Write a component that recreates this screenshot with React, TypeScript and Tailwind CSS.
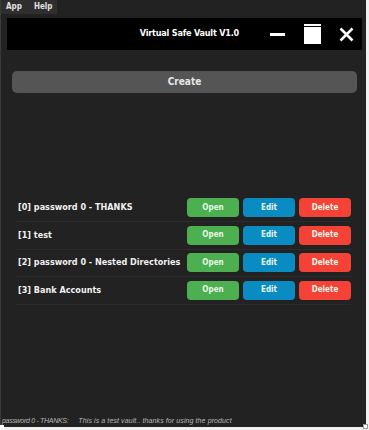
import React from "react";

const vaults = [
  "[0] password 0 - THANKS",
  "[1] test",
  "[2] password 0 - Nested Directories",
  "[3] Bank Accounts",
];

function RowButton({ label, color }: { label: string; color: string }) {
  return (
    <button
      className={`w-[52px] h-[19px] rounded-[4px] text-[8px] font-bold text-[#e8f5e8] ${color}`}
    >
      {label}
    </button>
  );
}

export default function App() {
  return (
    <div
      className="w-[369px] h-[430px] bg-[#f0f0f0] relative overflow-hidden"
      style={{ fontFamily: "'DejaVu Sans Condensed', 'Liberation Sans', sans-serif" }}
    >
      <div className="w-[366px] h-[427px] bg-[#222222] border-l border-[#3a3a3a] flex flex-col">
        {/* menu */}
        <div className="h-[14px] flex">
          <div className="bg-[#2e2e2e] flex items-center gap-[12px] px-[5px] text-[8px] text-[#e0e0e0] font-bold">
            <span>App</span>
            <span>Help</span>
          </div>
        </div>

        {/* title bar */}
        <div className="ml-[6px] mr-[4px] mt-[4px] h-[32px] bg-black flex items-center justify-end pr-[8px]">
          <span className="text-[9px] font-bold text-white tracking-[-0.2px]">Virtual Safe Vault V1.0</span>
          <div className="ml-[31px] w-[15px] h-[3px] bg-white" />
          <div className="ml-[19px] w-[17px] h-[20px] flex flex-col gap-[1px]">
            <div className="h-[2px] bg-white" />
            <div className="flex-1 bg-white" />
          </div>
          <svg className="ml-[18px]" width="15" height="15" viewBox="0 0 15 15">
            <path d="M1.5 1.5 L13.5 13.5 M13.5 1.5 L1.5 13.5" stroke="white" strokeWidth="2.6" />
          </svg>
        </div>

        {/* create */}
        <div className="pl-[11px] pr-[9px] mt-[18px]">
          <button className="w-full h-[22px] rounded-[5px] bg-[#555555] text-[10px] font-bold text-[#e6e6e6]">
            Create
          </button>
        </div>

        {/* rows */}
        <div className="mt-[102px] px-[15px] flex flex-col">
          {vaults.map((v) => (
            <div
              key={v}
              className="h-[27.5px] flex items-center border-b border-[#2c2c2c]"
            >
              <span className="flex-1 min-w-0 pl-[2px] text-[9px] font-bold text-[#f0f0f0] whitespace-nowrap">
                {v}
              </span>
              <div className="flex shrink-0 gap-[4px]">
                <RowButton label="Open" color="bg-[#4caf50]" />
                <RowButton label="Edit" color="bg-[#0a8bc2]" />
                <RowButton label="Delete" color="bg-[#f44336]" />
              </div>
            </div>
          ))}
        </div>

        <div className="flex-1" />

        {/* status */}
        <div
          className="h-[12px] flex items-center text-[7px] italic text-[#b8b8b8] pl-[1px] whitespace-nowrap"
          style={{ fontFamily: "'Liberation Sans', sans-serif" }}
        >
          <span className="tracking-[-0.3px]">password 0 - THANKS:</span>
          <span className="ml-[10px] tracking-[0.1px]">This is a test vault.. thanks for using the product</span>
        </div>
      </div>
      <div className="absolute left-0 bottom-[1px] w-[4px] h-[4px] bg-white" />
      <div className="absolute right-[1px] bottom-[1px] w-[5px] h-[5px] bg-white border border-[#999]" />
    </div>
  );
}
